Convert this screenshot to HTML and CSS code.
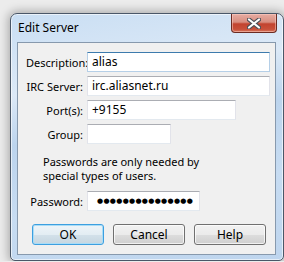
FILE: index.html
```html
<!DOCTYPE html>
<html lang="en">
<head>
    <meta charset="UTF-8">
    <meta name="viewport" content="width=device-width, initial-scale=1.0">
    <title>Edit Server</title>
    <link rel="stylesheet" href="styles.css">
</head>
<body>
    <div class="window">
        <div class="titlebar">
            <span class="title">Edit Server</span>
            <button class="close-btn" aria-label="Close">
                <svg width="14" height="11" viewBox="0 0 14 11">
                    <path d="M2 1.5 L12 9.5 M12 1.5 L2 9.5" stroke="#4b4f57" stroke-width="4.2" stroke-linecap="round"/>
                    <path d="M2 1.5 L12 9.5 M12 1.5 L2 9.5" stroke="#ffffff" stroke-width="2.2" stroke-linecap="round"/>
                </svg>
            </button>
        </div>
        <div class="client">
            <div class="form">
                <label class="label">Description:</label>
                <div class="textbox focused wide">alias</div>

                <label class="label">IRC Server:</label>
                <div class="textbox wide">irc.aliasnet.ru</div>

                <label class="label">Port(s):</label>
                <div class="textbox port">+9155</div>

                <label class="label">Group:</label>
                <div class="textbox group"></div>

                <p class="note">Passwords are only needed by<br>special types of users.</p>

                <label class="label">Password:</label>
                <div class="textbox password"><span class="dots">●●●●●●●●●●●●●●●</span></div>
            </div>
            <div class="buttons">
                <button class="btn default">OK</button>
                <button class="btn">Cancel</button>
                <button class="btn">Help</button>
            </div>
        </div>
    </div>
</body>
</html>
```
FILE: styles.css
```css
body {
    margin: 0;
    background-color: #ececec;
    font-family: "Noto Sans", "Open Sans", sans-serif;
    font-size: 11px;
    color: #000;
}
.window {
    margin: 13px 0 0 10px;
    width: 272px;
    height: 246px;
    border: 1px solid #4a5768;
    border-radius: 7px 7px 5px 5px;
    background: linear-gradient(170deg, #c9def3 0%, #dce9f7 28%, #bcd4ed 45%, #c7dcf2 70%, #bed5ee 100%);
    box-shadow: 0 0 10px 2px rgba(0, 0, 0, 0.28), inset 0 0 0 1px rgba(255, 255, 255, 0.6);
    display: flex;
    flex-direction: column;
}
.titlebar {
    height: 28px;
    display: flex;
    justify-content: space-between;
    align-items: flex-start;
    padding: 0 6px 0 7px;
}
.title {
    margin-top: 6px;
    font-size: 12px;
    line-height: 16px;
}
.close-btn {
    width: 46px;
    height: 19px;
    padding: 0;
    border: 1px solid #6b2b22;
    border-top: none;
    border-radius: 0 0 4px 4px;
    background: linear-gradient(to bottom, #e7aca2 0%, #d88e80 45%, #c2432f 55%, #c8503a 85%, #d77a60 100%);
    box-shadow: inset 0 0 0 1px rgba(255, 210, 200, 0.5);
    display: flex;
    justify-content: center;
    align-items: center;
}
.client {
    flex: 1;
    margin: 0 7px 5px 6px;
    border: 1px solid #8799ad;
    background-color: #f0f0f0;
}
.form {
    display: grid;
    grid-template-columns: 57px auto;
    column-gap: 4px;
    row-gap: 4px;
    align-items: center;
    padding: 9px 0 0 8px;
}
.label {
    text-align: right;
    white-space: nowrap;
}
.textbox {
    box-sizing: border-box;
    height: 20px;
    line-height: 18px;
    padding-left: 4px;
    background: #fff;
    border: 1px solid #e2e3ea;
    border-top-color: #abadb3;
    border-bottom-color: #e3e9ef;
    font-size: 12px;
}
.textbox.focused {
    border-color: #b5cfe7;
    border-top-color: #3d7bad;
}
.wide {
    width: 183px;
}
.port {
    width: 149px;
}
.group {
    width: 84px;
}
.password {
    width: 113px;
    white-space: nowrap;
}
.dots {
    font-family: "DejaVu Sans", sans-serif;
    font-size: 7px;
    letter-spacing: 0.3px;
    padding-left: 5px;
    vertical-align: top;
    line-height: 18px;
}
.note {
    grid-column: 1 / -1;
    margin: 7px 0 4px 17px;
    line-height: 14px;
}
.buttons {
    display: flex;
    gap: 9px;
    margin: 13px 0 0 14px;
}
.btn {
    width: 72px;
    height: 21px;
    padding: 0;
    border: 1px solid #707070;
    border-radius: 3px;
    background: linear-gradient(to bottom, #f2f2f2 0%, #ebebeb 50%, #dddddd 51%, #cfcfcf 100%);
    box-shadow: inset 0 0 0 1px rgba(255, 255, 255, 0.7);
    font-family: "Noto Sans", "Open Sans", sans-serif;
    font-size: 12px;
    color: #000;
}
.btn.default {
    border-color: #3c9fe0;
    background: linear-gradient(to bottom, #eef4f8 0%, #e3edf3 50%, #d3e1ea 51%, #c6d6e0 100%);
    box-shadow: inset 0 0 0 1px #a9dcf6;
}
```
